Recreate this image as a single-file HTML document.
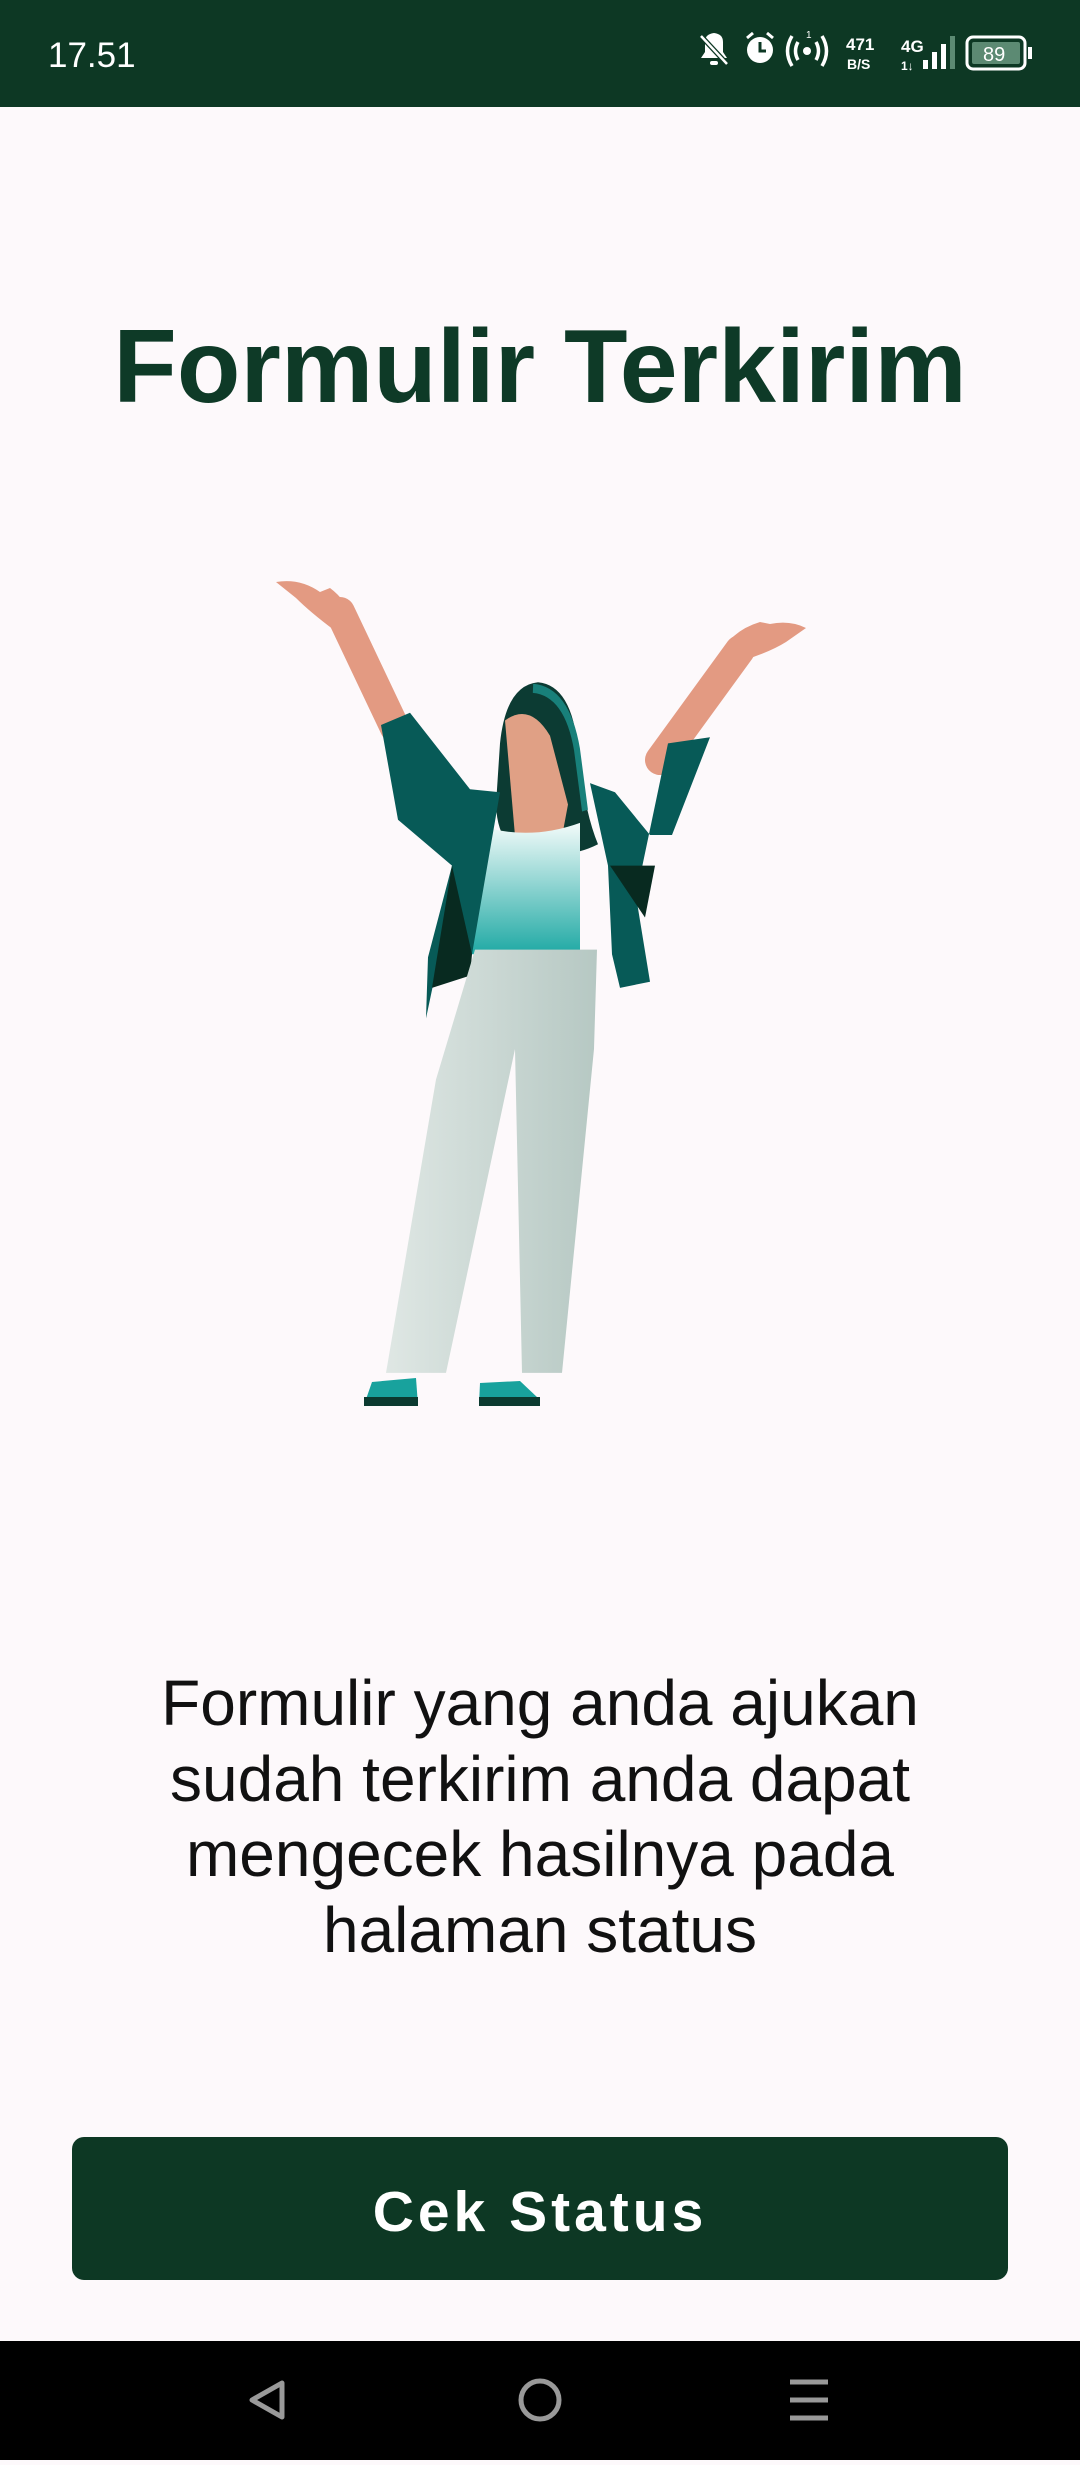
<!DOCTYPE html>
<html><head><meta charset="utf-8"><style>
*{margin:0;padding:0;box-sizing:border-box}
body{width:1080px;height:2460px;background:#fdf9fb;font-family:"Liberation Sans",Roboto,sans-serif;position:relative;overflow:hidden}
.sb{position:absolute;left:0;top:0;width:1080px;height:107px;background:#0d3824;color:#fff}
.time{position:absolute;left:48px;top:36px;font-size:35px}
h1{position:absolute;left:0;width:1080px;top:308px;text-align:center;font-size:104px;font-weight:bold;color:#0e3a27}
.msg{position:absolute;left:0;width:1080px;top:1666px;text-align:center;font-size:64px;line-height:75.5px;color:#111}
.btn{position:absolute;left:72px;top:2137px;width:936px;height:143px;background:#0d3824;border-radius:12px;color:#fff;font-weight:bold;font-size:57px;letter-spacing:4px;text-align:center;line-height:150px}
.nav{position:absolute;left:0;top:2341px;width:1080px;height:119px;background:#000}
</style></head><body>
<div class="sb"><div class="time">17.51</div>
<svg style="position:absolute;left:695px;top:30px" width="345" height="48" viewBox="0 0 345 48">
<g fill="#fff">
<path d="M10 12 q0-8 9-9 q9 1 9 9 v10 l4 6 h-26 l4-6z"/><rect x="15" y="31" width="8" height="4" rx="2"/>
<line x1="6" y1="6" x2="32" y2="34" stroke="#0d3824" stroke-width="5"/><line x1="6" y1="6" x2="32" y2="34" stroke="#fff" stroke-width="2.5"/>
<circle cx="65" cy="20" r="13"/><path d="M65 12 v9 h6" stroke="#0d3824" stroke-width="3" fill="none"/>
<path d="M52 8 l6-5 M78 8 l-6-5" stroke="#fff" stroke-width="3"/>
<circle cx="112" cy="21" r="4"/>
<path d="M103 12 q-5 9 0 18 M121 12 q5 9 0 18 M97 6 q-9 15 0 30 M127 6 q9 15 0 30" stroke="#fff" stroke-width="3.5" fill="none"/>
<text x="111" y="8" font-size="10" fill="#fff" font-family="Liberation Sans">1</text>
<text x="151" y="20" font-size="17" font-weight="bold" fill="#fff" font-family="Liberation Sans">471</text>
<text x="152" y="39" font-size="14" font-weight="bold" fill="#fff" font-family="Liberation Sans">B/S</text>
<text x="206" y="22" font-size="17" font-weight="bold" fill="#fff" font-family="Liberation Sans">4G</text>
<text x="206" y="40" font-size="12" font-weight="bold" fill="#fff" font-family="Liberation Sans">1↓</text>
<rect x="228" y="30" width="5" height="9"/><rect x="237" y="22" width="5" height="17"/><rect x="246" y="14" width="5" height="25"/><rect x="255" y="6" width="5" height="33" fill="#5c8a73"/>
<rect x="272" y="7" width="58" height="32" rx="6" fill="none" stroke="#fff" stroke-width="3"/>
<rect x="277" y="12" width="48" height="22" rx="2" fill="#5c8a73"/><rect x="333" y="17" width="4" height="12"/>
<text x="288" y="31" font-size="20" fill="#fff" font-family="Liberation Sans">89</text>
</g></svg></div>

<h1>Formulir Terkirim</h1>

<svg style="position:absolute;left:0;top:0" width="1080" height="1500" viewBox="0 0 1080 1500">
<defs>
<linearGradient id="top" x1="0" y1="0" x2="0" y2="1"><stop offset="0" stop-color="#f3fbfa"/><stop offset="1" stop-color="#1fa9a4"/></linearGradient>
<linearGradient id="pant" x1="0" y1="0" x2="1" y2="0"><stop offset="0" stop-color="#dfe7e4"/><stop offset="1" stop-color="#b6c8c3"/></linearGradient>
</defs>
<!-- arms -->
<path d="M340 612 L395 728" stroke="#e39a82" stroke-width="30" stroke-linecap="round"/>
<path d="M276 582 Q300 578 320 592 L330 588 Q346 600 352 618 L334 630 Q310 612 296 598 Z" fill="#e39a82"/>
<path d="M740 650 L660 760" stroke="#e39a82" stroke-width="30" stroke-linecap="round"/>
<path d="M806 628 Q790 620 770 624 L760 622 Q740 628 728 642 L744 660 Q770 652 786 642 Z" fill="#e39a82"/>
<g transform="translate(0,560) scale(1,1.528) translate(0,-560)">
<path d="M500 680 q6-38 38-40 q34 2 40 44 q6 40 20 62 q-30 10 -60 4 q-40 4 -42-30z" fill="#0c3b33"/>
<path d="M505 665 q25-12 45 10 l18 45 l-8 28 h-44 z" fill="#e0a085"/>
<path d="M533 644 q34 2 44 40 l8 40" stroke="#18807a" stroke-width="6" fill="none"/>
<path d="M472 732 Q525 745 580 732 L580 818 L472 818Z" fill="url(#top)"/>
<path d="M381 668 L410 660 L470 710 L500 712 L472 818 L435 832 L426 860 L428 820 L452 760 L398 730 Z" fill="#075a57"/>
<path d="M452 760 L472 818 L470 832 L432 840Z" fill="#082a20"/>
<path d="M668 680 L710 676 L672 740 L650 740 L615 712 L590 706 L608 760 L612 818 L620 840 L650 836 L636 780Z" fill="#075a57"/>
<path d="M610 760 L655 760 L645 794 Z" fill="#082a20"/>
<path d="M475 815 L597 815 L594 880 L562 1092 L522 1092 L515 880 L446 1092 L386 1092 L436 900Z" fill="url(#pant)"/>
</g>
<path d="M372 1382 L416 1378 L418 1405 L364 1405 Z" fill="#18a29d"/>
<rect x="364" y="1397" width="54" height="9" fill="#0b3a30"/>
<path d="M480 1383 L520 1381 L538 1398 L540 1405 L479 1405Z" fill="#18a29d"/>
<rect x="479" y="1397" width="61" height="9" fill="#0b3a30"/>
</svg>

<div class="msg">Formulir yang anda ajukan<br>sudah terkirim anda dapat<br>mengecek hasilnya pada<br>halaman status</div>

<div class="btn">Cek Status</div>

<div class="nav">
<svg width="1080" height="119" viewBox="0 0 1080 119">
<path d="M282 42 L252 59 L282 76Z" fill="none" stroke="#999" stroke-width="5" stroke-linejoin="round"/>
<circle cx="540" cy="59" r="19" fill="none" stroke="#999" stroke-width="5"/>
<path d="M790 41 h38 M790 59 h38 M790 77 h38" stroke="#999" stroke-width="5"/>
</svg></div>
</body></html>
